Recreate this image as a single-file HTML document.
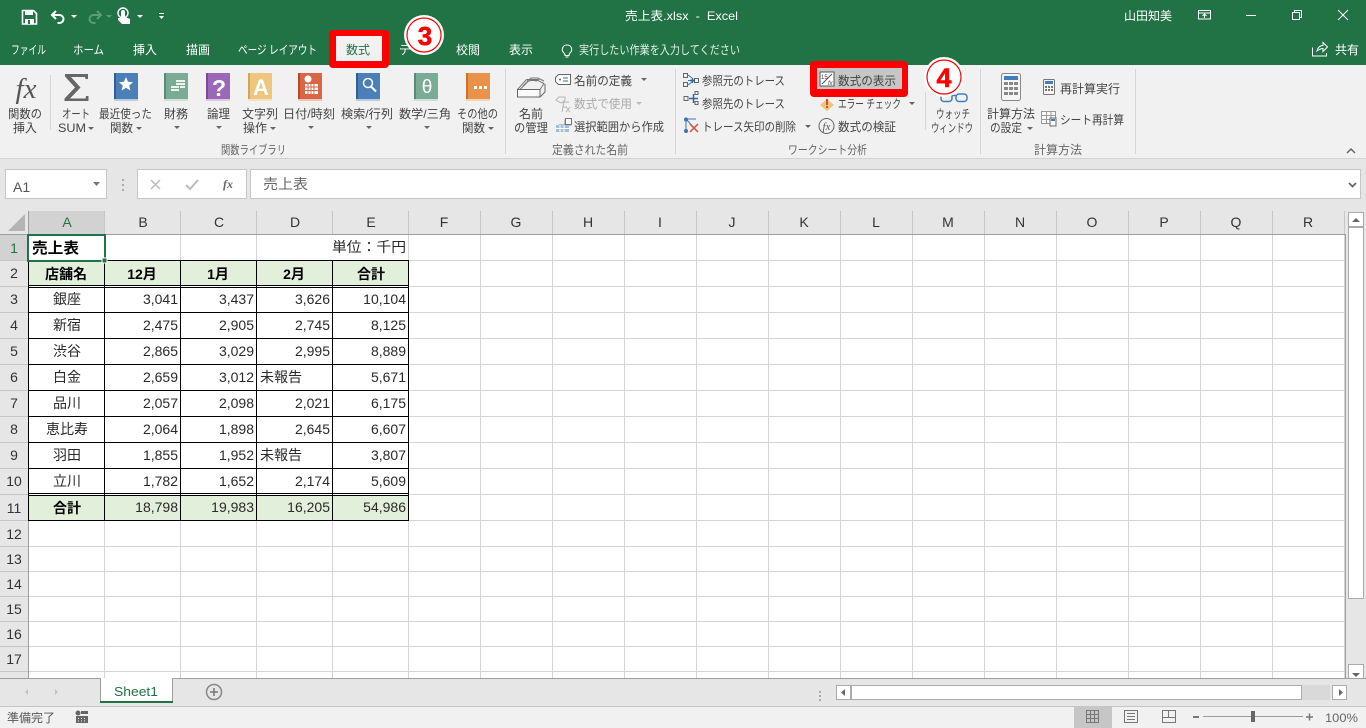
<!DOCTYPE html>
<html lang="ja"><head><meta charset="utf-8"><title>売上表.xlsx - Excel</title>
<style>
html,body{margin:0;padding:0;background:#fff;overflow:hidden}
svg{display:block;font-family:"Liberation Sans","Noto Sans CJK JP",sans-serif}
.w{fill:#fff;font-size:12px}
.r{fill:#444;font-size:12px}
.g{fill:#666;font-size:12px}
.d{fill:#aaa;font-size:12px}
.c{fill:#2a2a2a;font-size:14px}
.cm{fill:#2a2a2a;font-size:14px;text-anchor:middle}
.ce{fill:#2a2a2a;font-size:14px;text-anchor:end}
.b{fill:#000;font-size:14px;font-weight:700;text-anchor:middle}
.h{fill:#333;font-size:14px;text-anchor:middle}
.n{fill:#333;font-size:14px;text-anchor:middle}
</style></head><body>
<svg width="1366" height="728" viewBox="0 0 1366 728" xmlns="http://www.w3.org/2000/svg">
<defs><path id="da" d="M0 0h6l-3 3z" fill="#666"/></defs>
<!-- backgrounds -->
<rect width="1366" height="65" fill="#217346"/>
<rect y="65" width="1366" height="93" fill="#f1f1f1"/>
<rect y="158" width="1366" height="1" fill="#d2d2d2"/>
<rect y="159" width="1366" height="52" fill="#e6e6e6"/>
<rect y="211" width="1346" height="467" fill="#fff"/>
<rect x="0" y="211" width="1346" height="24" fill="#e6e6e6"/>
<rect x="0" y="211" width="28" height="467" fill="#e6e6e6"/>
<rect x="1345" y="211" width="21" height="467" fill="#e6e6e6"/>
<rect y="678" width="1366" height="28" fill="#e6e6e6"/>
<rect y="706" width="1366" height="22" fill="#f1f1f1"/>
<rect y="706" width="1366" height="1" fill="#c6c6c6"/>

<!-- QAT -->
<path d="M22.500 10.500h11l3 3v10.500h-14z" fill="none" stroke="#fff" stroke-width="1.600"/>
<rect x="25" y="10" width="8" height="5" fill="#fff"/>
<rect x="25" y="19" width="9" height="5" fill="#fff"/><rect x="28" y="20" width="2" height="4" fill="#217346"/>
<path d="M56 11l-4 4 4 4M52.500 15h7a4 4 0 0 1 0 8h-2" fill="none" stroke="#fff" stroke-width="2"/>
<path d="M71 15h6l-3 3z" fill="#fff"/>
<path d="M97 11l4 4-4 4M100.500 15h-7a4 4 0 0 0 0 8h2" fill="none" stroke="#5b9c78" stroke-width="2"/>
<path d="M106 15h6l-3 3z" fill="#5b9c78"/>
<path d="M121 18v-6a2 2 0 0 1 4 0v5l5 2v5h-8l-4-4v-2z" fill="#fff"/><circle cx="123" cy="13" r="5" fill="none" stroke="#fff" stroke-width="1.400"/>
<path d="M137 15h6l-3 3z" fill="#fff"/>
<rect x="159" y="13" width="5" height="1" fill="#fff"/><path d="M159 16h5l-2.500 3z" fill="#fff"/>

<!-- Title -->
<text x="625" y="20" class="w" textLength="113" lengthAdjust="spacingAndGlyphs" xml:space="preserve">売上表.xlsx  -  Excel</text>
<text x="1124" y="20" class="w" textLength="48" lengthAdjust="spacingAndGlyphs">山田知美</text>
<path d="M1198.500 10.500h12v8.500h-12zM1198.500 13h12M1204.500 18v-4M1202.500 16l2-2 2 2" fill="none" stroke="#fff"/>
<rect x="1246" y="15" width="10" height="1" fill="#fff"/>
<path d="M1292.500 12.500h7v7h-7zM1294.500 12.500v-2h7v7h-2" fill="none" stroke="#fff"/>
<path d="M1338 10l10 10M1348 10l-10 10" stroke="#fff" fill="none"/>

<!-- Tabs -->
<text x="11" y="54" class="w" textLength="35" lengthAdjust="spacingAndGlyphs">ファイル</text>
<text x="73" y="54" class="w" textLength="31" lengthAdjust="spacingAndGlyphs">ホーム</text>
<text x="133" y="54" class="w" textLength="24" lengthAdjust="spacingAndGlyphs">挿入</text>
<text x="186" y="54" class="w" textLength="24" lengthAdjust="spacingAndGlyphs">描画</text>
<text x="238" y="54" class="w" textLength="79" lengthAdjust="spacingAndGlyphs">ページ レイアウト</text>
<text x="399" y="54" class="w">データ</text>
<text x="456" y="54" class="w" textLength="24" lengthAdjust="spacingAndGlyphs">校閲</text>
<text x="509" y="54" class="w" textLength="24" lengthAdjust="spacingAndGlyphs">表示</text>
<text x="579" y="54" fill="#e4efe8" font-size="12" textLength="161" lengthAdjust="spacingAndGlyphs">実行したい作業を入力してください</text>
<text x="1335" y="54" class="w" textLength="24" lengthAdjust="spacingAndGlyphs">共有</text>
<path d="M567 45a4.500 4.500 0 0 1 3 8c-.6.6-1 1.400-1 2.500h-4c0-1.100-.4-1.900-1-2.500a4.500 4.500 0 0 1 3-8zM565.500 57h3" fill="none" stroke="#fff"/>
<path d="M1312.500 47.500v8.500h14v-3M1317 51c1-4 3-5.500 6-5.500v-3l4.500 4.500-4.500 4.500v-3c-2 0-4 1-6 2.500z" fill="none" stroke="#fff"/>

<!-- Ribbon: function library -->
<text x="26" y="98" font-family="Liberation Serif" font-style="italic" font-size="29" fill="#555" text-anchor="middle">fx</text>
<rect x="50" y="75" width="1" height="55" fill="#d5d5d5"/>
<path d="M65 74h23v5h-2.500l-.5-2h-14l9.500 10.500-10.500 11h15.500l.5-2.500h2.500v5h-24v-2.500l10.500-11-10-11z" fill="#666"/>
<!-- books -->
<rect x="114" y="73" width="24" height="26" fill="#4a7fb8"/><rect x="114" y="73" width="2" height="28" fill="#2f5f96"/><rect x="114" y="99" width="24" height="2" fill="#b9cde2"/>
<path d="M126 77l2 4.800 5 .4-3.800 3.300 1.200 5-4.400-2.700-4.400 2.700 1.200-5-3.800-3.300 5-.4z" fill="#fff"/>
<rect x="164" y="73" width="24" height="26" fill="#7aab96"/><rect x="164" y="73" width="2" height="28" fill="#5a8a76"/><rect x="164" y="99" width="24" height="2" fill="#cfe0d8"/>
<path d="M171 86h8v2h-8zM171 89h8v2h-8zM176 80h9v2h-9zM176 83h9v2h-9zM180 86h5v2h-5z" fill="#eef4f1"/>
<rect x="206" y="73" width="24" height="26" fill="#9a68b6"/><rect x="206" y="73" width="2" height="28" fill="#7a4a96"/><rect x="206" y="99" width="24" height="2" fill="#d8c8e2"/>
<text x="219" y="96" font-size="23" font-weight="700" fill="#fff" text-anchor="middle">?</text>
<rect x="248" y="73" width="24" height="26" fill="#eec67e"/><rect x="248" y="73" width="2" height="28" fill="#cfa45c"/><rect x="248" y="99" width="24" height="2" fill="#f5e3c2"/>
<text x="261" y="95" font-size="22" font-weight="700" fill="#fff" text-anchor="middle">A</text>
<rect x="298" y="73" width="24" height="26" fill="#d86544"/><rect x="298" y="73" width="2" height="28" fill="#b24a2c"/><rect x="298" y="99" width="24" height="2" fill="#efc5b6"/>
<circle cx="308" cy="79" r="3.500" fill="#fff"/><path d="M305 84h13v10h-13z" fill="#fff"/><path d="M308 84v10M311 84v10M314 84v10M305 87h13M305 90.500h13" stroke="#d86544"/>
<rect x="356" y="73" width="24" height="26" fill="#4a7fb8"/><rect x="356" y="73" width="2" height="28" fill="#2f5f96"/><rect x="356" y="99" width="24" height="2" fill="#b9cde2"/>
<circle cx="368" cy="83" r="4.500" fill="none" stroke="#fff" stroke-width="1.500"/><path d="M371 86.500l5 5" stroke="#fff" stroke-width="2"/>
<rect x="414" y="73" width="24" height="26" fill="#7aab96"/><rect x="414" y="73" width="2" height="28" fill="#5a8a76"/><rect x="414" y="99" width="24" height="2" fill="#cfe0d8"/>
<text x="427" y="93" font-size="19" fill="#fff" text-anchor="middle">θ</text>
<rect x="466" y="73" width="24" height="26" fill="#e8924a"/><rect x="466" y="73" width="2" height="28" fill="#c8722c"/><rect x="466" y="99" width="24" height="2" fill="#f5d3b6"/>
<path d="M474 86h3v3h-3zM479 86h3v3h-3zM484 86h3v3h-3z" fill="#fff"/>

<text x="8" y="118" class="r" textLength="34" lengthAdjust="spacingAndGlyphs">関数の</text>
<text x="13" y="132" class="r" textLength="24" lengthAdjust="spacingAndGlyphs">挿入</text>
<text x="62" y="118" class="r" textLength="28" lengthAdjust="spacingAndGlyphs">オート</text>
<text x="58" y="132" class="r" textLength="28" lengthAdjust="spacingAndGlyphs">SUM</text>
<text x="99" y="118" class="r" textLength="53" lengthAdjust="spacingAndGlyphs">最近使った</text>
<text x="110" y="132" class="r" textLength="23" lengthAdjust="spacingAndGlyphs">関数</text>
<text x="164" y="118" class="r" textLength="24" lengthAdjust="spacingAndGlyphs">財務</text>
<text x="207" y="118" class="r" textLength="23" lengthAdjust="spacingAndGlyphs">論理</text>
<text x="242" y="118" class="r" textLength="36" lengthAdjust="spacingAndGlyphs">文字列</text>
<text x="243" y="132" class="r" textLength="24" lengthAdjust="spacingAndGlyphs">操作</text>
<text x="283" y="118" class="r" textLength="52" lengthAdjust="spacingAndGlyphs">日付/時刻</text>
<text x="341" y="118" class="r" textLength="52" lengthAdjust="spacingAndGlyphs">検索/行列</text>
<text x="399" y="118" class="r" textLength="52" lengthAdjust="spacingAndGlyphs">数学/三角</text>
<text x="457" y="118" class="r" textLength="41" lengthAdjust="spacingAndGlyphs">その他の</text>
<text x="462" y="132" class="r" textLength="23" lengthAdjust="spacingAndGlyphs">関数</text>
<use href="#da" x="88" y="127"/><use href="#da" x="136" y="127"/><use href="#da" x="174" y="126"/><use href="#da" x="216" y="126"/><use href="#da" x="270" y="127"/><use href="#da" x="308" y="126"/><use href="#da" x="366" y="126"/><use href="#da" x="424" y="126"/><use href="#da" x="488" y="127"/>
<text x="221" y="154" class="g" textLength="65" lengthAdjust="spacingAndGlyphs">関数ライブラリ</text>
<rect x="505" y="69" width="1" height="85" fill="#d5d5d5"/>

<!-- Defined names -->
<path d="M517.500 89.500l9-10h12l-3 2h0M520 89.500l9-9h9l6 3-4 6M523 86l8-8h7l6 3" fill="none" stroke="#777"/>
<rect x="517.500" y="89.500" width="22.500" height="7.500" fill="#fafafa" stroke="#666"/>
<path d="M540 97l5-5v-8" fill="none" stroke="#666"/>
<rect x="527" y="80" width="3" height="1.500" fill="#888"/>
<text x="519" y="118" class="r" textLength="24" lengthAdjust="spacingAndGlyphs">名前</text>
<text x="514" y="132" class="r" textLength="34" lengthAdjust="spacingAndGlyphs">の管理</text>
<path d="M558.500 74.500h12v10h-12l-3-3v-4z" fill="#fff" stroke="#666"/><path d="M563 78h5M563 81h5" stroke="#3a6ea5"/><circle cx="560" cy="79.500" r="1" fill="#666"/>
<text x="574" y="85" class="r" textLength="58" lengthAdjust="spacingAndGlyphs">名前の定義</text>
<use href="#da" x="641" y="78"/>
<path d="M556 100l3-3h6v3l-3 3-3-1zM562 112l2-10h5M562 107h5M566 107l4 5M570 107l-4 5" stroke="#b5b5b5" fill="none"/>
<text x="574" y="108" class="d" textLength="58" lengthAdjust="spacingAndGlyphs">数式で使用</text>
<path d="M636 102h6l-3 3z" fill="#bbb"/>
<path d="M559 125h12v-5h-6v5" fill="none" stroke="#888"/><path d="M565.500 118.500h6v6h-6z" fill="#fff" stroke="#777"/>
<rect x="556" y="125" width="13" height="7" fill="#9fbfdc"/><path d="M560 125v7M564 125v7M556 128.500h13" stroke="#fff"/>
<text x="574" y="131" class="r" textLength="90" lengthAdjust="spacingAndGlyphs">選択範囲から作成</text>
<text x="552" y="154" class="g" textLength="76" lengthAdjust="spacingAndGlyphs">定義された名前</text>
<rect x="675" y="69" width="1" height="85" fill="#d5d5d5"/>

<!-- Formula auditing -->
<g fill="none" stroke="#666">
<path d="M683.500 73.500h4v4h-4zM683.500 82.500h4v4h-4zM694.500 78.500h4v4h-4z"/>
<path d="M684 96.500h4v4h-4zM695 91.500h3v3h-3zM695 101.500h3v3h-3z"/>
</g>
<path d="M688 75l4 3M688 85l4-3M692 80.500h-4" stroke="#3a75b0" fill="none"/><path d="M690 80.500h5M692.500 78v5" stroke="#2a68a8" stroke-width="1.500"/>
<path d="M689 98.500h9M693.500 94v9" stroke="#2a68a8" stroke-width="1.500"/>
<path d="M686 119l0 12M686 119l10 0M686 119l10 11" stroke="#3a75b0" fill="none"/><circle cx="686" cy="119.500" r="2" fill="#3a75b0"/><circle cx="686" cy="131" r="2" fill="#3a75b0"/>
<path d="M690 124l8 8M698 124l-8 8" stroke="#d8503a" stroke-width="1.500"/>
<text x="702" y="85" class="r" textLength="83" lengthAdjust="spacingAndGlyphs">参照元のトレース</text>
<text x="702" y="108" class="r" textLength="83" lengthAdjust="spacingAndGlyphs">参照先のトレース</text>
<text x="702" y="131" class="r" textLength="94" lengthAdjust="spacingAndGlyphs">トレース矢印の削除</text>
<use href="#da" x="805" y="125"/>
<path d="M827 99l7 6-7 6-7-6z" fill="#eec67e"/><rect x="826" y="99" width="2" height="6" fill="#d8503a"/><rect x="826" y="106" width="2" height="2" fill="#d8503a"/>
<text x="838" y="108" class="r" textLength="63" lengthAdjust="spacingAndGlyphs">エラー チェック</text>
<use href="#da" x="909" y="102"/>
<circle cx="826.500" cy="126" r="7.500" fill="none" stroke="#666"/>
<text x="826.500" y="130" font-family="Liberation Serif" font-style="italic" font-size="11" fill="#555" text-anchor="middle">fx</text>
<text x="838" y="131" class="r" textLength="58" lengthAdjust="spacingAndGlyphs">数式の検証</text>
<!-- watch -->
<rect x="925" y="92" width="1" height="38" fill="#d5d5d5"/>
<rect x="941" y="94" width="11" height="7.500" rx="3" fill="none" stroke="#3f7fbc" stroke-width="1.500"/>
<rect x="956" y="94" width="11" height="7.500" rx="3" fill="none" stroke="#3f7fbc" stroke-width="1.500"/>
<path d="M952 95.500h4" stroke="#3f7fbc" stroke-width="1.500"/>
<text x="936" y="118" class="r" textLength="34" lengthAdjust="spacingAndGlyphs">ウォッチ</text>
<text x="931" y="132" class="r" textLength="42" lengthAdjust="spacingAndGlyphs">ウィンドウ</text>
<text x="788" y="154" class="g" textLength="79" lengthAdjust="spacingAndGlyphs">ワークシート分析</text>
<rect x="980" y="69" width="1" height="85" fill="#d5d5d5"/>

<!-- Calc -->
<rect x="1001.500" y="73.500" width="19" height="27" rx="2" fill="#f6f6f6" stroke="#888"/>
<rect x="1004" y="76" width="14" height="4" fill="#3f7fbc"/>
<path d="M1004 82h4v3h-4zM1009 82h4v3h-4zM1014 82h4v3h-4zM1004 87h4v3h-4zM1009 87h4v3h-4zM1014 87h4v3h-4zM1004 92h4v3h-4zM1009 92h4v3h-4zM1014 92h4v3h-4z" fill="#888"/>
<text x="987" y="118" class="r" textLength="48" lengthAdjust="spacingAndGlyphs">計算方法</text>
<text x="990" y="132" class="r" textLength="32" lengthAdjust="spacingAndGlyphs">の設定</text>
<use href="#da" x="1027" y="127"/>
<rect x="1043.500" y="79.500" width="11" height="15" rx="1" fill="#f6f6f6" stroke="#777"/><rect x="1045" y="81" width="8" height="3" fill="#3f7fbc"/>
<path d="M1045 86h2v2h-2zM1048 86h2v2h-2zM1051 86h2v2h-2zM1045 89h2v2h-2zM1048 89h2v2h-2zM1051 89h2v2h-2z" fill="#777"/>
<text x="1060" y="93" class="r" textLength="60" lengthAdjust="spacingAndGlyphs">再計算実行</text>
<path d="M1041.500 111.500h14v12h-14zM1041.500 115.500h14M1041.500 119.500h14M1046.500 111.500v12M1051 111.500v12" fill="#fff" stroke="#999"/>
<rect x="1050" y="118" width="6" height="8" fill="#fff" stroke="#666"/><rect x="1051" y="119" width="4" height="2" fill="#3f7fbc"/>
<text x="1060" y="124" class="r" textLength="64" lengthAdjust="spacingAndGlyphs">シート再計算</text>
<text x="1034" y="154" class="g" textLength="48" lengthAdjust="spacingAndGlyphs">計算方法</text>
<rect x="1135" y="69" width="1" height="85" fill="#d5d5d5"/>
<path d="M1347 153l4-4 4 4" fill="none" stroke="#666" stroke-width="1.500"/>

<!-- Formula bar -->
<rect x="5.500" y="169.500" width="101" height="29" fill="#fff" stroke="#c6c6c6"/>
<text x="13" y="192" font-size="14" fill="#555">A1</text>
<path d="M93 182h7l-3.500 4z" fill="#777"/>
<path d="M122 179h2v2h-2zM122 184h2v2h-2zM122 189h2v2h-2z" fill="#aaa"/>
<rect x="137.500" y="169.500" width="109" height="29" fill="#fff" stroke="#c6c6c6"/>
<path d="M151 180l9 9M160 180l-9 9" stroke="#bcbcbc" stroke-width="1.500" fill="none"/>
<path d="M186 185l4 4 8-9" stroke="#bcbcbc" stroke-width="2" fill="none"/>
<text x="228" y="188" font-family="Liberation Serif" font-style="italic" font-weight="700" font-size="12" fill="#666" text-anchor="middle">fx</text>
<rect x="250.500" y="169.500" width="1110" height="29" fill="#fff" stroke="#c6c6c6"/>
<text x="263" y="189" font-size="14" fill="#666" textLength="45" lengthAdjust="spacingAndGlyphs">売上表</text>
<path d="M1349 183l3.500 3.500 3.500-3.500" stroke="#666" stroke-width="1.800" fill="none"/>

<!-- Sheet headers -->
<rect x="28" y="211" width="76" height="24" fill="#d2d2d2"/>
<rect x="0" y="235" width="28" height="26" fill="#d2d2d2"/>
<path d="M25 214v17h-17z" fill="#b4b4b4"/>
<g fill="#c6c6c6">
<rect x="0" y="234" width="1346" height="1" fill="#9e9e9e"/>
<rect x="28" y="211" width="1" height="467" fill="#9e9e9e"/>
<rect x="104" y="211" width="1" height="23"/><rect x="180" y="211" width="1" height="23"/><rect x="256" y="211" width="1" height="23"/><rect x="332" y="211" width="1" height="23"/><rect x="408" y="211" width="1" height="23"/><rect x="480" y="211" width="1" height="23"/><rect x="552" y="211" width="1" height="23"/><rect x="624" y="211" width="1" height="23"/><rect x="696" y="211" width="1" height="23"/><rect x="768" y="211" width="1" height="23"/><rect x="840" y="211" width="1" height="23"/><rect x="912" y="211" width="1" height="23"/><rect x="984" y="211" width="1" height="23"/><rect x="1056" y="211" width="1" height="23"/><rect x="1128" y="211" width="1" height="23"/><rect x="1200" y="211" width="1" height="23"/><rect x="1272" y="211" width="1" height="23"/><rect x="1344" y="211" width="1" height="23"/>
</g>
<text x="67" y="227" class="h" style="fill:#217346">A</text>
<text x="143" y="227" class="h">B</text><text x="219" y="227" class="h">C</text><text x="295" y="227" class="h">D</text><text x="371" y="227" class="h">E</text><text x="444" y="227" class="h">F</text><text x="516" y="227" class="h">G</text><text x="588" y="227" class="h">H</text><text x="660" y="227" class="h">I</text><text x="732" y="227" class="h">J</text><text x="804" y="227" class="h">K</text><text x="876" y="227" class="h">L</text><text x="948" y="227" class="h">M</text><text x="1020" y="227" class="h">N</text><text x="1092" y="227" class="h">O</text><text x="1164" y="227" class="h">P</text><text x="1236" y="227" class="h">Q</text><text x="1308" y="227" class="h">R</text>

<text x="14" y="253" class="n" style="fill:#217346">1</text><text x="14" y="278" class="n">2</text><text x="14" y="304" class="n">3</text><text x="14" y="330" class="n">4</text><text x="14" y="356" class="n">5</text><text x="14" y="382" class="n">6</text><text x="14" y="408" class="n">7</text><text x="14" y="434" class="n">8</text><text x="14" y="460" class="n">9</text><text x="14" y="486" class="n">10</text><text x="14" y="513" class="n">11</text><text x="14" y="539" class="n">12</text><text x="14" y="564" class="n">13</text><text x="14" y="589" class="n">14</text><text x="14" y="614" class="n">15</text><text x="14" y="639" class="n">16</text><text x="14" y="664" class="n">17</text>

<!-- Row-header separators -->
<path d="M0 260.500h28M0 286.500h28M0 312.500h28M0 338.500h28M0 364.500h28M0 390.500h28M0 416.500h28M0 442.500h28M0 468.500h28M0 494.500h28M0 520.500h28M0 546.500h28M0 571.500h28M0 596.500h28M0 621.500h28M0 646.500h28M0 671.500h28" stroke="#c6c6c6"/>

<!-- gridlines -->
<path d="M29 260.500h1316M409 286.500h936M409 312.500h936M409 338.500h936M409 364.500h936M409 390.500h936M409 416.500h936M409 442.500h936M409 468.500h936M409 494.500h936M409 520.500h936M29 546.500h1316M29 571.500h1316M29 596.500h1316M29 621.500h1316M29 646.500h1316M29 671.500h1316" stroke="#d4d4d4"/>
<path d="M104.500 235v25M180.500 235v25M256.500 235v25M408.500 235v25M104.500 521v157M180.500 521v157M256.500 521v157M332.500 521v157M408.500 521v157M480.500 235v443M552.500 235v443M624.500 235v443M696.500 235v443M768.500 235v443M840.500 235v443M912.500 235v443M984.500 235v443M1056.500 235v443M1128.500 235v443M1200.500 235v443M1272.500 235v443M1344.500 235v443" stroke="#d4d4d4"/>

<!-- filled rows -->
<rect x="29" y="261" width="380" height="25" fill="#e2efda"/>
<rect x="29" y="495" width="380" height="25" fill="#e2efda"/>
<!-- black borders -->
<path d="M28.500 260v261M104.500 260v261M180.500 260v261M256.500 260v261M332.500 260v261M408.500 260v261M28 260.500h381M28 285.500h381M28 287.500h381M28 312.500h381M28 338.500h381M28 364.500h381M28 390.500h381M28 416.500h381M28 442.500h381M28 468.500h381M28 493.500h381M28 495.500h381M28 520.500h381" stroke="#000" fill="none"/>
<!-- selection -->
<rect x="28" y="235" width="77" height="26" fill="none" stroke="#217346" stroke-width="2"/>
<rect x="102" y="258" width="5" height="5" fill="#217346" stroke="#fff"/>

<!-- cells -->
<text x="32" y="253" font-size="15" font-weight="700" fill="#000" textLength="47" lengthAdjust="spacingAndGlyphs">売上表</text>
<text x="406" y="252" class="ce" textLength="74" lengthAdjust="spacingAndGlyphs">単位：千円</text>
<text x="66" y="279" class="b">店舗名</text><text x="142" y="279" class="b">12月</text><text x="218" y="279" class="b">1月</text><text x="294" y="279" class="b">2月</text><text x="371" y="279" class="b">合計</text>
<text x="67" y="304" class="cm">銀座</text><text x="178" y="304" class="ce">3,041</text><text x="254" y="304" class="ce">3,437</text><text x="330" y="304" class="ce">3,626</text><text x="406" y="304" class="ce">10,104</text>
<text x="67" y="330" class="cm">新宿</text><text x="178" y="330" class="ce">2,475</text><text x="254" y="330" class="ce">2,905</text><text x="330" y="330" class="ce">2,745</text><text x="406" y="330" class="ce">8,125</text>
<text x="67" y="356" class="cm">渋谷</text><text x="178" y="356" class="ce">2,865</text><text x="254" y="356" class="ce">3,029</text><text x="330" y="356" class="ce">2,995</text><text x="406" y="356" class="ce">8,889</text>
<text x="67" y="382" class="cm">白金</text><text x="178" y="382" class="ce">2,659</text><text x="254" y="382" class="ce">3,012</text><text x="260" y="382" class="c">未報告</text><text x="406" y="382" class="ce">5,671</text>
<text x="67" y="408" class="cm">品川</text><text x="178" y="408" class="ce">2,057</text><text x="254" y="408" class="ce">2,098</text><text x="330" y="408" class="ce">2,021</text><text x="406" y="408" class="ce">6,175</text>
<text x="67" y="434" class="cm">恵比寿</text><text x="178" y="434" class="ce">2,064</text><text x="254" y="434" class="ce">1,898</text><text x="330" y="434" class="ce">2,645</text><text x="406" y="434" class="ce">6,607</text>
<text x="67" y="460" class="cm">羽田</text><text x="178" y="460" class="ce">1,855</text><text x="254" y="460" class="ce">1,952</text><text x="260" y="460" class="c">未報告</text><text x="406" y="460" class="ce">3,807</text>
<text x="67" y="486" class="cm">立川</text><text x="178" y="486" class="ce">1,782</text><text x="254" y="486" class="ce">1,652</text><text x="330" y="486" class="ce">2,174</text><text x="406" y="486" class="ce">5,609</text>
<text x="67" y="513" class="b">合計</text><text x="178" y="512" class="ce">18,798</text><text x="254" y="512" class="ce">19,983</text><text x="330" y="512" class="ce">16,205</text><text x="406" y="512" class="ce">54,986</text>

<!-- vertical scrollbar -->
<rect x="1345" y="234" width="1" height="444" fill="#9e9e9e"/>
<rect x="1348.500" y="212.500" width="15" height="14" fill="#fff" stroke="#ababab"/>
<path d="M1352 222l4-4 4 4z" fill="#666"/>
<rect x="1348.500" y="227.500" width="15" height="371" fill="#fff" stroke="#ababab"/>
<rect x="1348.500" y="664.500" width="15" height="14" fill="#fff" stroke="#ababab"/>
<path d="M1352 673l4 4 4-4z" fill="#666"/>

<!-- sheet tabs -->
<rect y="678" width="1366" height="1" fill="#9e9e9e"/>
<path d="M28 692l-3 3 3 3z M55 692l3 3-3 3z" transform="translate(0 -3)" fill="#c2c2c2"/>
<rect x="100" y="678" width="73" height="23" fill="#fff"/>
<path d="M100.500 678v24M172.500 678v24" stroke="#9e9e9e"/>
<rect x="100" y="701" width="73" height="2" fill="#217346"/>
<text x="114" y="696" font-size="13" fill="#217346" textLength="44" lengthAdjust="spacingAndGlyphs">Sheet1</text>
<circle cx="214" cy="692" r="7.500" fill="none" stroke="#888" stroke-width="1.500"/>
<path d="M210 692h8M214 688v8" stroke="#777" stroke-width="1.500"/>
<path d="M819 691h2v2h-2zM819 695h2v2h-2zM819 699h2v2h-2z" fill="#aaa"/>
<rect x="836.500" y="685.500" width="14" height="14" fill="#fff" stroke="#ababab"/>
<path d="M845 689l-4 3.500 4 3.500z" fill="#666"/>
<rect x="851" y="685" width="479" height="15" fill="#d9d9d9"/>
<rect x="851.500" y="685.500" width="450" height="14" fill="#fff" stroke="#ababab"/>
<rect x="1332.500" y="685.500" width="14" height="14" fill="#fff" stroke="#ababab"/>
<path d="M1339 689l4 3.500-4 3.500z" fill="#666"/>

<!-- status bar -->
<text x="7" y="722" font-size="12" fill="#555" textLength="48" lengthAdjust="spacingAndGlyphs">準備完了</text>
<circle cx="78" cy="713" r="2.500" fill="#666"/>
<path d="M81 711h7v3h-7zM76 716h12v7h-12z" fill="#666"/>
<path d="M78 718h1v1h-1zM81 718h1v1h-1zM84 718h1v1h-1zM78 720.500h1v1h-1zM81 720.500h1v1h-1zM84 720.500h1v1h-1z" fill="#f1f1f1"/>
<rect x="1074" y="707" width="38" height="21" fill="#c6c6c6"/>
<path d="M1086.500 710.500h12v12h-12zM1090.500 710.500v12M1094.500 710.500v12M1086.500 714.500h12M1086.500 718.500h12" fill="none" stroke="#777"/>
<path d="M1124.500 710.500h13v12h-13z" fill="none" stroke="#777"/><path d="M1127 713.500h8M1127 716.500h8M1127 719.500h8" stroke="#777"/>
<path d="M1162.500 710.500h13v12h-13zM1168.500 710.500v7h-6M1168.500 717.500h7" fill="none" stroke="#777"/>
<rect x="1193" y="716" width="6" height="2" fill="#777"/>
<rect x="1203" y="716" width="100" height="1" fill="#9a9a9a"/>
<rect x="1251" y="711" width="4" height="11" fill="#666"/>
<path d="M1306 717h7M1309.500 713.500v7" stroke="#777" stroke-width="1.500"/>
<text x="1325" y="722" font-size="12" fill="#666" textLength="33" lengthAdjust="spacingAndGlyphs">100%</text>

<!-- Annotations -->
<rect x="329" y="30" width="60" height="38" rx="4" fill="#ff0000"/>
<rect x="336" y="36" width="46" height="25" fill="#f1f1f1"/>
<text x="346" y="54" font-size="12" fill="#217346" textLength="24" lengthAdjust="spacingAndGlyphs">数式</text>
<circle cx="424" cy="35" r="20" fill="#fff"/>
<circle cx="424" cy="35" r="17" fill="#fff" stroke="#ff0000" stroke-width="1.200"/>
<text x="425" y="45" font-size="26" font-weight="700" fill="#ff0000" stroke="#ff0000" stroke-width=".6" text-anchor="middle">3</text>

<rect x="810" y="61" width="98" height="36" rx="4" fill="#ff0000"/>
<rect x="817" y="68" width="85" height="21" fill="#c6c6c6"/>
<path d="M820 72h14v14h-14z" fill="#fff" stroke="#555"/><path d="M822 84l10-10" stroke="#555"/>
<text x="821" y="79" font-size="6" fill="#444">15</text><text x="828" y="85" font-size="6" font-style="italic" fill="#444">fx</text>
<text x="838" y="85" class="r" textLength="58" lengthAdjust="spacingAndGlyphs">数式の表示</text>
<circle cx="944" cy="77" r="20" fill="#fff"/>
<circle cx="944" cy="77" r="17" fill="#fff" stroke="#ff0000" stroke-width="1.200"/>
<text x="944" y="87" font-size="27" font-weight="700" fill="#ff0000" stroke="#ff0000" stroke-width=".6" text-anchor="middle">4</text>
</svg>
</body></html>
